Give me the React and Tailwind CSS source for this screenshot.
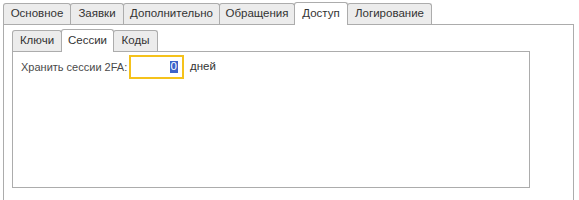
import React from 'react';

const outerTabs = [
  { label: 'Основное', w: 'w-[68px]' },
  { label: 'Заявки', w: 'w-[54px]' },
  { label: 'Дополнительно', w: 'w-[97px]' },
  { label: 'Обращения', w: 'w-[76px]' },
  { label: 'Доступ', w: 'w-[54px]', active: true },
  { label: 'Логирование', w: 'w-[85px]' },
];

const innerTabs = [
  { label: 'Ключи', w: 'w-[50px]' },
  { label: 'Сессии', w: 'w-[53px]', active: true },
  { label: 'Коды', w: 'w-[45px]' },
];

const Tab = ({ label, w, active }) => (
  <div
    className={
      active
        ? `${w} h-[23px] -mb-px -ml-px first:ml-0 z-10 flex items-center justify-center border border-b-0 border-[#acacac] rounded-t-[3px] bg-white text-[#333]`
        : `${w} h-[21px] -ml-px first:ml-0 flex items-center justify-center border border-b-0 border-[#acacac] rounded-t-[3px] bg-[#ececec] text-[#333]`
    }
  >
    {label}
  </div>
);

export default function App() {
  return (
    <div
      className="w-[579px] h-[200px] overflow-hidden bg-white text-[11.5px] leading-none"
      style={{ fontFamily: '"Liberation Sans", Arial, sans-serif' }}
    >
      <div className="flex items-end pl-[3px] pt-[2px] relative">
        {outerTabs.map((t) => (
          <Tab key={t.label} {...t} />
        ))}
      </div>
      <div className="ml-[3px] w-[571px] h-[200px] border border-[#acacac] pl-[8px] pt-[4px]">
        <div className="flex items-end relative">
          {innerTabs.map((t) => (
            <Tab key={t.label} {...t} />
          ))}
        </div>
        <div className="w-[518px] h-[137px] border border-[#acacac] pl-[8px] pt-[3px]">
          <div className="flex items-center">
            <span className="text-[#4a4a4a] text-[11px] w-[108px] whitespace-nowrap">Хранить сессии 2FA:</span>
            <div className="w-[55px] h-[24px] border-2 border-[#f5c21b] flex items-center justify-end pr-[4px]">
              <span className="bg-[#3d63c9] text-white px-px">0</span>
            </div>
            <span className="ml-[6px] text-[#333]">дней</span>
          </div>
        </div>
      </div>
    </div>
  );
}
